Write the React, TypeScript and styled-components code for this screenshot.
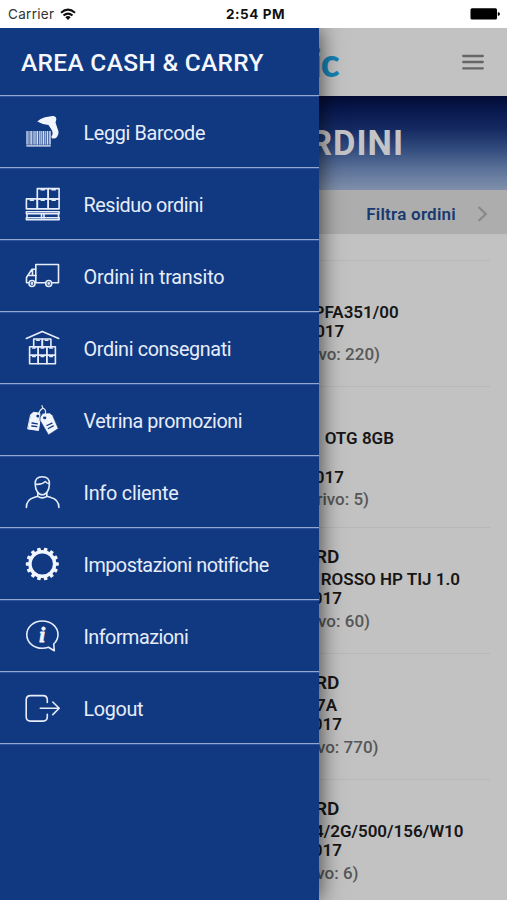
import React from 'react';
import styled, { createGlobalStyle } from 'styled-components';

const GlobalStyle = createGlobalStyle`
  * { box-sizing: border-box; }
  body { margin: 0; background: #c2c2c2; font-family: Roboto, "Liberation Sans", sans-serif; }
`;

const Screen = styled.div`
  height: 900px;
  display: flex;
  flex-direction: column;
  overflow: hidden;
`;

/* ---------- status bar ---------- */

const StatusBar = styled.div`
  flex: none;
  height: 28px;
  padding: 0 7px 0 8px;
  display: grid;
  grid-template-columns: 1fr auto 1fr;
  align-items: center;
  background: #fff;
  color: #111;
  font-family: Inter, "Liberation Sans", sans-serif;
  font-size: 13.5px;
`;

const Carrier = styled.div`
  display: flex;
  align-items: center;
  gap: 6px;
  color: #333;
  letter-spacing: 0.3px;
`;

const Clock = styled.div`
  padding-left: 3px;
  font-weight: 650;
  letter-spacing: 0.55px;
`;

const Battery = styled.svg`
  justify-self: end;
`;

/* ---------- page behind the drawer ---------- */

const Body = styled.div`
  position: relative;
  flex: 1;
  min-height: 0;
  overflow: hidden;
`;

const Page = styled.main`
  display: flex;
  flex-direction: column;
`;

const TopBar = styled.header`
  height: 68px;
  padding: 0 23px 0 311.5px;
  display: flex;
  align-items: center;
  justify-content: space-between;
`;

const Brand = styled.span`
  font: 900 39px/40px Lato, sans-serif;
  letter-spacing: -1px;
  color: #1583b6;
`;

const Banner = styled.div`
  height: 94px;
  padding: 0 103px 1px 0;
  display: flex;
  align-items: center;
  justify-content: flex-end;
  background: linear-gradient(#030c34 0%, #08174c 14%, #152b62 36%, #324b7d 56%, #5c7299 78%, #8090ac 100%);
  color: #c4c4c6;
  font-size: 34.5px;
  font-weight: 700;
  letter-spacing: 1px;
`;

const FilterBar = styled.div`
  height: 44px;
  padding: 3px 19px 0 0;
  display: flex;
  align-items: center;
  justify-content: flex-end;
  gap: 21px;
  background: #adadad;
  color: #17396f;
  font-size: 17px;
  font-weight: 600;
  letter-spacing: 0.25px;
`;

const Orders = styled.ul`
  list-style: none;
  margin: 26px 17px 0 300px;
  padding: 0;
`;

const Order = styled.li<{ $tall?: boolean }>`
  height: ${p => (p.$tall ? 141 : 126)}px;
  padding-top: 17px;
  border-top: 1px solid #b8b8b8;
`;

const Line = styled.div<{ $end: number }>`
  width: ${p => p.$end}px;
  height: 19.5px;
  line-height: 19.5px;
  text-align: right;
  white-space: nowrap;
  font-size: 17px;
  font-weight: 600;
  color: #161616;
`;

const Title = styled(Line)`
  height: 24.5px;
  line-height: 24.5px;
  font-size: 19px;
`;

const Arrival = styled(Line)`
  height: 24px;
  line-height: 24px;
  font-weight: 500;
  color: #575757;
`;

/* ---------- drawer ---------- */

const Drawer = styled.nav`
  position: absolute;
  top: 0;
  left: 0;
  bottom: 0;
  width: 319px;
  background: #113982;
  box-shadow: 0 0 22px rgba(0, 0, 0, 0.72);
  color: #e6edf9;
`;

const DrawerHead = styled.div`
  height: 68px;
  padding: 2px 0 0 21px;
  display: flex;
  align-items: center;
  border-bottom: 1px solid #93a8ce;
  box-shadow: 0 1px 0 #2f539a;
  font-size: 24.5px;
  font-weight: 550;
  letter-spacing: 0.3px;
  white-space: nowrap;
  color: #f4f7fd;
`;

const MenuItem = styled.a`
  height: 72px;
  padding-left: 22px;
  display: flex;
  align-items: flex-start;
  gap: 21.5px;
  border-bottom: 1px solid #93a8ce;
  box-shadow: 0 1px 0 #2f539a;
`;

const MenuIcon = styled.svg`
  flex: none;
  width: 40px;
  height: 40px;
  margin-top: 16px;
  fill: none;
  stroke: #e6edf9;
  stroke-width: 1.6;
  stroke-linecap: round;
  stroke-linejoin: round;
`;

const Label = styled.span<{ $spacing: number }>`
  line-height: 24px;
  margin-top: 26px;
  font-size: 19.8px;
  font-weight: 380;
  letter-spacing: ${p => p.$spacing}px;
  white-space: nowrap;
`;

/* ---------- drawings ---------- */

const white = '#f1f5fd';

const bars = [
  [4.4, 1.2], [6.6, 0.7], [8.4, 1.4], [10.8, 0.7], [12.4, 1.1], [14.6, 1.4],
  [17, 0.7], [18.6, 1.1], [20.8, 1.4], [23.2, 0.7], [24.9, 1.2], [27.3, 1.4],
];

const BarcodeIcon = () => (
  <>
    <g fill="#d5dff2" stroke="none">
      {bars.map(([x, w]) => <rect key={x} x={x} y="19" width={w} height="13.5" />)}
      <rect x="4.4" y="33" width="24.3" height="1.7" opacity="0.75" />
      <rect x="4.4" y="19" width="24.3" height="15.5" opacity="0.25" />
    </g>
    <path
      fill={white} stroke="none"
      d="M15.3 9.600Q18 6.500 23 5.300L30.500 4Q34.500 3.800 34.300 7.500L33.500 10.500Q35 15 36.500 19.500Q37 22 35 25Q33.500 27 30 26.500L29.300 24.500Q31.500 22 30 18.500L26.500 13Q21 13 15.300 9.600Z"
    />
  </>
);

type BoxProps = { x: number; y: number; w: number; h: number };
const Box = ({ x, y, w, h }: BoxProps) => (
  <>
    <rect x={x} y={y} width={w} height={h} />
    <path d={`M${x + w * 0.35} ${y + 1.2}h${w * 0.3}`} />
  </>
);

const PalletIcon = () => (
  <>
    {[15.3, 26.2].map(x => <Box key={x} x={x} y={4.6} w={10.9} h={10.3} />)}
    {[4.4, 15.3, 26.2].map(x => <Box key={x} x={x} y={14.9} w={10.9} h={10} />)}
    <rect x="4.4" y="27.700" width="32.700" height="2" />
    <rect x="4.400" y="33.800" width="32.700" height="2" />
    <path d="M5 30v4M19.500 30v4M22 30v4M36.500 30v4" />
  </>
);

const TruckIcon = () => (
  <>
    <path d="M23 26.800H13.800V8.500H36.500V26.800H30.500" />
    <path d="M13.800 13.300H10L5.800 19.500L4.500 21.500V26.800H6.300M14 19.500H6.500M10.500 13.500V19" />
    <circle cx="10" cy="27.500" r="3" />
    <circle cx="26.700" cy="27.500" r="3" />
    <circle cx="10" cy="27.500" r="0.600" />
    <circle cx="26.700" cy="27.500" r="0.600" />
  </>
);

const WarehouseIcon = () => (
  <>
    <path d="M4.300 10.500L20.300 3.400L36.700 10.500" />
    {[11.7, 20.3].map(x => <Box key={x} x={x} y={11} w={8.6} h={7.8} />)}
    {[7.6, 16.2, 24.8].map(x => <Box key={x} x={x} y={18.8} w={8.6} h={8.4} />)}
    {[7.6, 16.2, 24.8].map(x => <Box key={x} x={x} y={27.2} w={8.6} h={8.6} />)}
  </>
);

const TagsIcon = () => (
  <>
    <path fill={white} stroke={white} strokeWidth="1" d="M8.900 14.500L11.500 12.300L17.800 13.200L18 20L16.500 30.500L6 28.900Z" />
    <path fill={white} stroke="#113982" strokeWidth="0.700" d="M18.300 16.900L20.800 13.200L27.700 12.900L30.600 15.300L36.300 28.600L26.500 34.900L18.100 20.500Z" />
    <circle cx="15.800" cy="15.900" r="1.500" fill="#113982" stroke="none" />
    <circle cx="22.700" cy="17.700" r="1.600" fill="#113982" stroke="none" />
    <path strokeWidth="1.200" d="M20 5.500Q20.300 8 21.300 8.300Q25 10 22.800 16.500M20.800 8.300Q17.500 10 16.500 14.500" />
    <path stroke="#113982" strokeWidth="1.300" d="M10 23l5.300.800M9.800 26l5 .700M25 25.500l5-2.400M26.300 28.500l5-2.600" />
  </>
);

const PersonIcon = () => (
  <>
    <path d="M13.200 12Q13 4.700 20.300 4.700Q27.600 4.700 27.400 12Q27.300 17 25.300 19.800Q23.300 22.800 20.300 22.800Q17.300 22.800 15.300 19.800Q13.300 17 13.200 12Z" />
    <path d="M13.800 12.300Q20 12.800 23.500 9.500Q24.500 11.500 27.200 11.700M15.800 20.500V24.300Q20.300 27.500 24.800 24.300V20.500" />
    <path d="M4.400 35.500Q4.500 27.300 12 25.500L15.800 24.200M36.900 35.500Q36.700 27.300 29 25.500L24.800 24.200" />
  </>
);

const GearIcon = () => (
  <>
    <circle cx="20.300" cy="20" r="12.300" strokeWidth="3.400" stroke={white} />
    <g fill={white} stroke="none">
      {Array.from({ length: 14 }, (_, i) => (
        <rect key={i} x="18.500" y="3.500" width="3.600" height="4" rx="0.700" transform={`rotate(${(i + 0.5) * (360 / 14)} 20.300 20)`} />
      ))}
    </g>
  </>
);

const InfoLetter = styled.text`
  font: italic 700 21px "Liberation Serif", serif;
  fill: ${white};
  stroke: ${white};
  stroke-width: 0.9;
`;

const InfoIcon = () => (
  <>
    <path d="M26.500 31.200Q23.500 32.300 20.300 32.300C11.500 32.300 4.800 26.300 4.800 18.700S11.500 5 20.300 5S36 11 36 18.700Q36 24 31.700 28L32.300 34.800Z" />
    <InfoLetter x="17.300" y="25.500">i</InfoLetter>
  </>
);

const LogoutIcon = () => (
  <>
    <path d="M25.300 14.500V12Q25.300 7.600 21 7.600H8.500Q4.200 7.600 4.200 12V28.800Q4.200 33.100 8.500 33.100H21Q25.300 33.100 25.300 28.800V26.200" />
    <path d="M18.300 20.300H37M30.800 14L37.200 20.300L30.800 26.600" />
  </>
);

const menu = [
  { label: 'Leggi Barcode', spacing: -0.34, Icon: BarcodeIcon },
  { label: 'Residuo ordini', spacing: -0.42, Icon: PalletIcon },
  { label: 'Ordini in transito', spacing: -0.2, Icon: TruckIcon },
  { label: 'Ordini consegnati', spacing: -0.37, Icon: WarehouseIcon },
  { label: 'Vetrina promozioni', spacing: -0.42, Icon: TagsIcon },
  { label: 'Info cliente', spacing: -0.22, Icon: PersonIcon },
  { label: 'Impostazioni notifiche', spacing: -0.49, Icon: GearIcon },
  { label: 'Informazioni', spacing: -0.52, Icon: InfoIcon },
  { label: 'Logout', spacing: -0.35, Icon: LogoutIcon },
];

type OrderData = { title?: [string, number]; name: [string, number]; extra?: boolean; date: number; arrival: [string, number] };
const orders: OrderData[] = [
  { name: ['PFA351/00', 98.7], date: 44.3, arrival: ['vo: 220)', 80] },
  { name: ['OTG 8GB', 94], extra: true, date: 44, arrival: ['rivo: 5)', 69] },
  { title: ['RD', 39.5], name: ['ROSSO HP TIJ 1.0', 160], date: 42, arrival: ['vo: 60)', 70] },
  { title: ['RD', 39.5], name: ['7A', 37], date: 42, arrival: ['vo: 770)', 78.5] },
  { title: ['RD', 39.5], name: ['4/2G/500/156/W10', 163.5], date: 42, arrival: ['vo: 6)', 58.5] },
];

export default function App() {
  return (
    <Screen>
      <GlobalStyle />
      <StatusBar>
        <Carrier>
          Carrier
          <svg width="16" height="13" viewBox="0 0 16 13" fill="none" stroke="#111" strokeWidth="2">
            <path d="M1 4.700Q8-1.500 15 4.700M3.500 7.600Q8 3.600 12.500 7.600" />
            <path d="M5.300 9.200Q8 7 10.700 9.200L8 12Z" fill="#111" stroke="none" />
          </svg>
        </Carrier>
        <Clock>2:54 PM</Clock>
        <Battery width="30" height="12" viewBox="0 0 30 12">
          <rect x="0.500" y="0.300" width="26.500" height="11.300" rx="1.500" />
          <path d="M27.800 4Q30 4.500 30 6T27.800 8Z" />
        </Battery>
      </StatusBar>
      <Body>
        <Page>
          <TopBar>
            <Brand>ic</Brand>
            <svg width="22" height="16" viewBox="0 0 22 16" fill="none" stroke="#666" strokeWidth="2.300" strokeLinecap="round">
              <path d="M1.200 2H20.800M1.200 8H20.800M1.200 14.300H20.800" />
            </svg>
          </TopBar>
          <Banner>RDINI</Banner>
          <FilterBar>
            Filtra ordini
            <svg width="11" height="16" viewBox="0 0 11 16" fill="none" stroke="#888" strokeWidth="2.200">
              <path d="M1.500 1L8.800 8L1.500 15" />
            </svg>
          </FilterBar>
          <Orders>
            {orders.map((o, i) => (
              <Order key={i} $tall={o.extra}>
                <Title $end={o.title ? o.title[1] : 0}>{o.title?.[0]}</Title>
                <Line $end={o.name[1]}>{o.name[0]}</Line>
                {o.extra && <Line $end={0} />}
                <Line $end={o.date}>017</Line>
                <Arrival $end={o.arrival[1]}>{o.arrival[0]}</Arrival>
              </Order>
            ))}
          </Orders>
        </Page>
        <Drawer>
          <DrawerHead>AREA CASH &amp; CARRY</DrawerHead>
          {menu.map(({ label, spacing, Icon }) => (
            <MenuItem key={label}>
              <MenuIcon viewBox="0 0 40 40"><Icon /></MenuIcon>
              <Label $spacing={spacing}>{label}</Label>
            </MenuItem>
          ))}
        </Drawer>
      </Body>
    </Screen>
  );
}
